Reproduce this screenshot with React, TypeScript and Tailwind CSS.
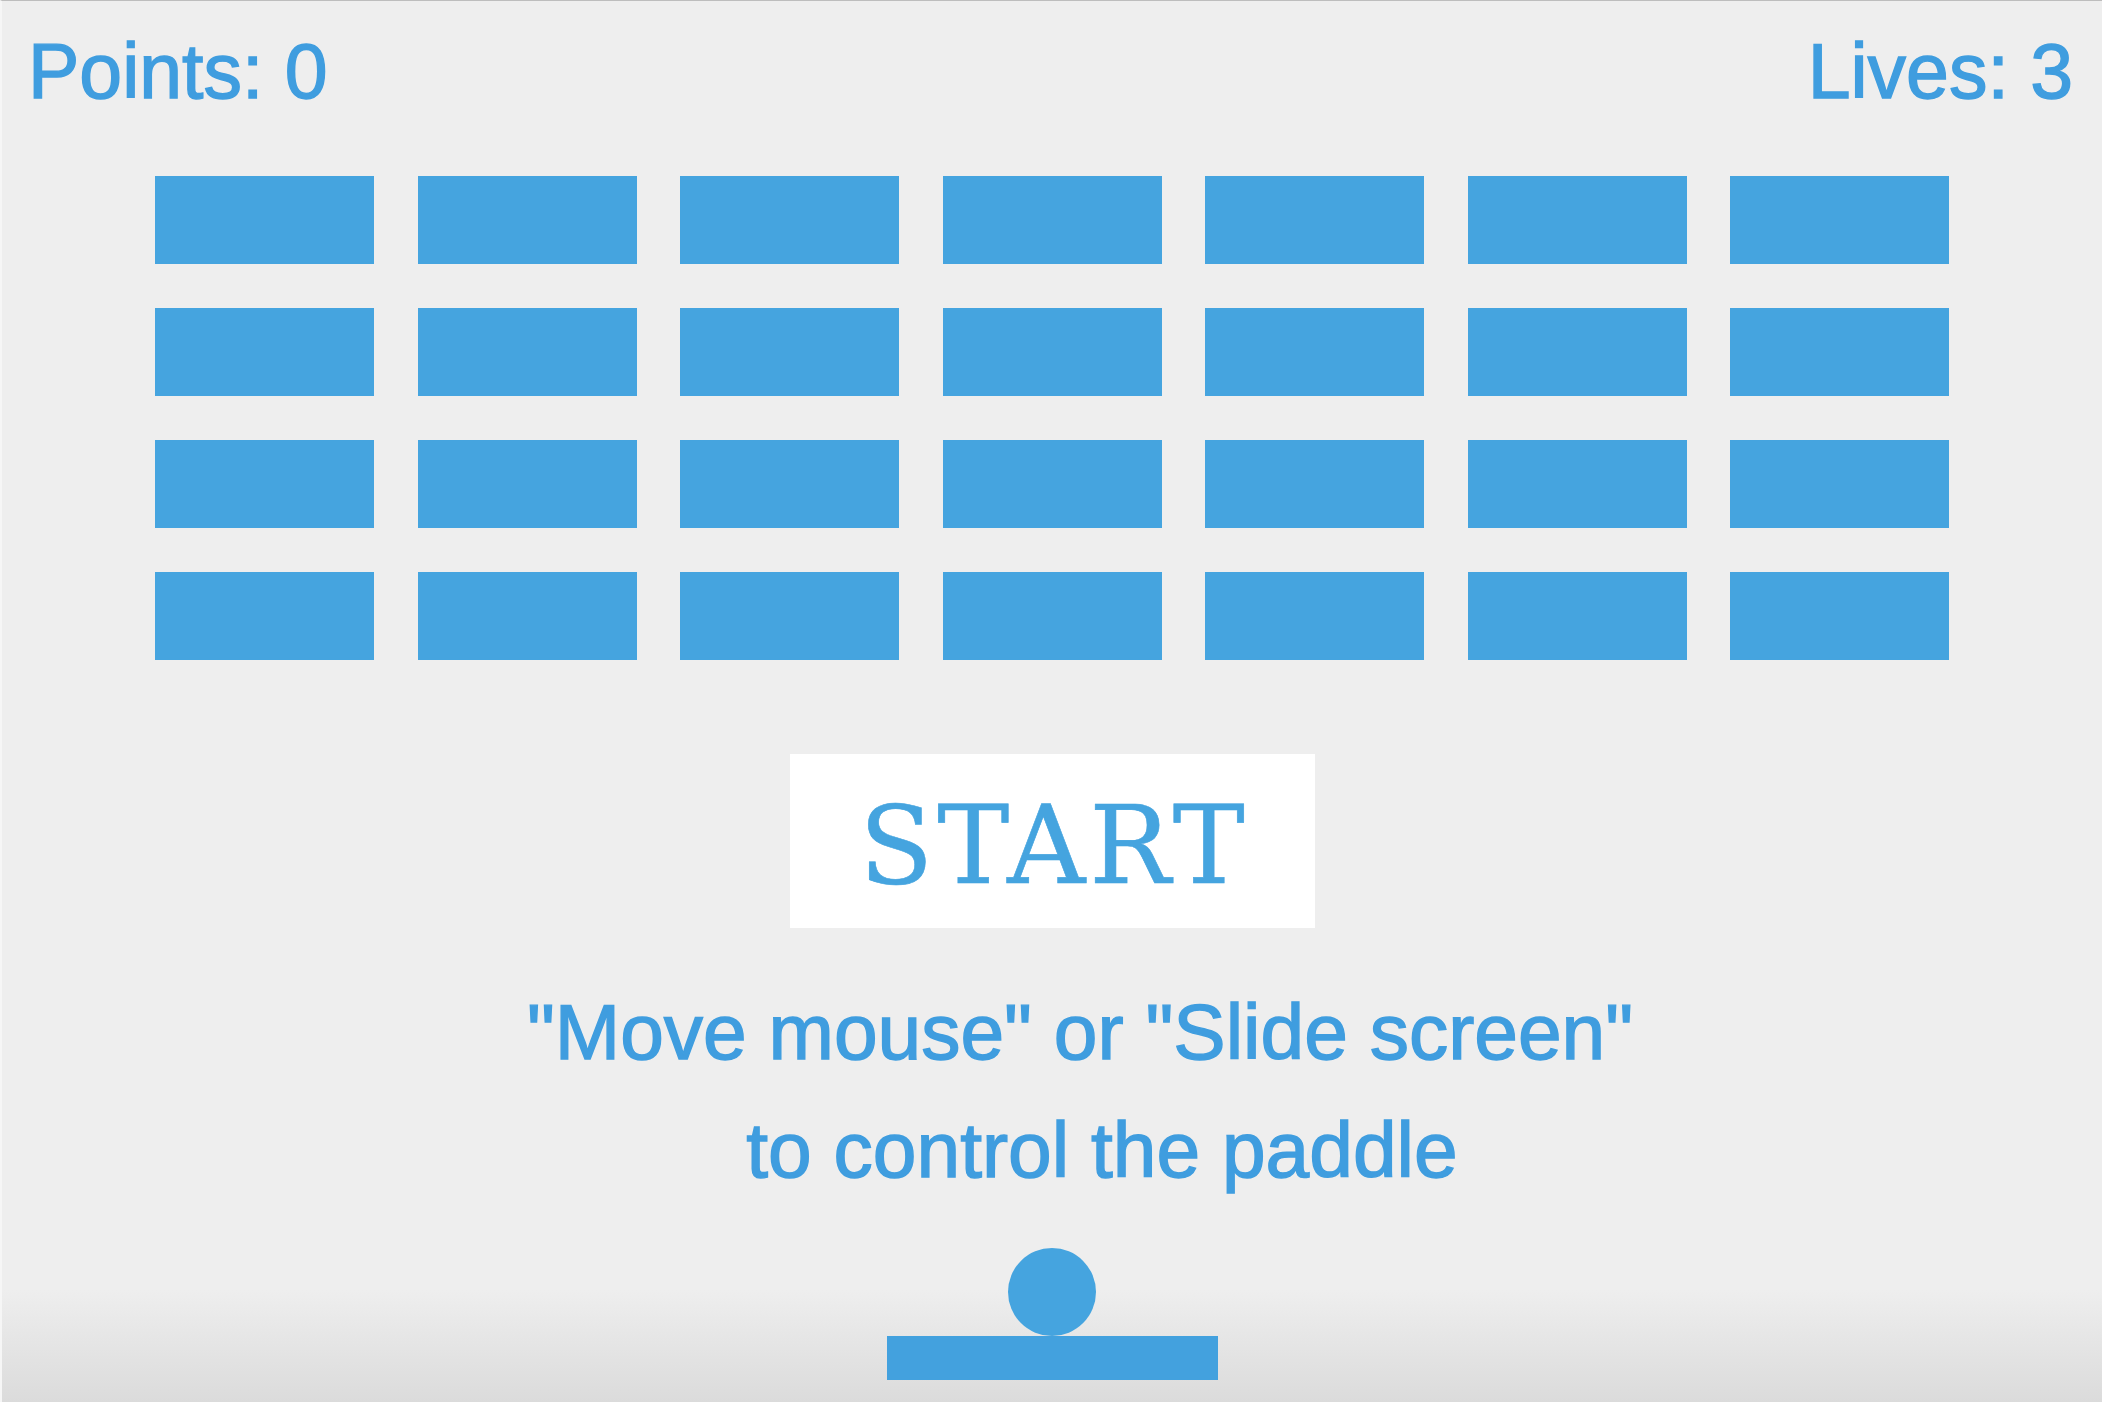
import React from "react";

const COLS = 7;
const ROWS = 4;

export default function App() {
  const bricks = Array.from({ length: COLS * ROWS }, (_, i) => i);
  return (
    <div className="w-[2102px] h-[1402px] overflow-hidden border-t border-[#bdbdbd] border-l-2 border-l-[#f6f6f6] bg-[linear-gradient(to_bottom,#eeeeee_0%,#eeeeee_92%,#dbdbdb_100%)] flex flex-col items-center font-['Liberation_Sans',Arial,sans-serif] text-[#3f9ddf]">
      <div className="w-full flex justify-between pl-[26px] pr-[29px] pt-[32px] text-[77px] leading-none [-webkit-text-stroke:1.4px_#3f9ddf]">
        <span>Points: 0</span>
        <span>Lives: 3</span>
      </div>

      <div className="mt-[66px] grid grid-cols-[repeat(7,219px)] gap-x-[43.5px] gap-y-[44px]">
        {bricks.map((i) => (
          <div key={i} className="w-[219px] h-[88px] bg-[#45a4df]" />
        ))}
      </div>

      <div className="mt-[94px] w-[525px] h-[174px] bg-white flex items-center justify-center">
        <span className="font-['DejaVu_Serif',serif] text-[108px] leading-none tracking-[4px] text-[#45a4df] [-webkit-text-stroke:0.6px_#45a4df] pl-[4px] pt-[9px]">
          START
        </span>
      </div>

      <div className="mt-[45px] w-full flex flex-col items-center text-[78.5px] leading-[118px] [-webkit-text-stroke:1.4px_#3f9ddf]">
        <div className="pl-[56px]">"Move mouse" or "Slide screen"</div>
        <div className="pl-[100px]">to control the paddle</div>
      </div>

      <div className="mt-[39px] w-[88px] h-[88px] rounded-full bg-[#45a4df]" />
      <div className="w-[331px] h-[44px] bg-[#43a1de]" />
    </div>
  );
}
